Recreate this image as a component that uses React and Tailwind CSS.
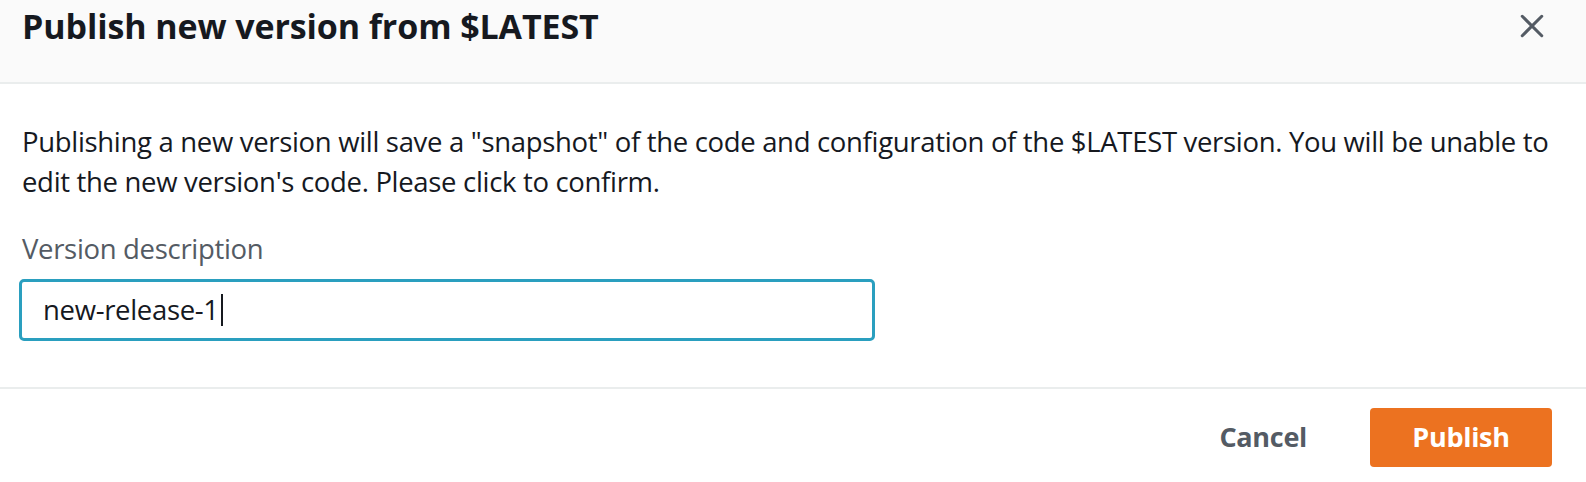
export default function App() {
  return (
    <div
      className="w-[1586px] h-[482px] bg-white flex flex-col overflow-hidden"
      style={{ fontFamily: '"Open Sans", "Noto Sans", sans-serif' }}
    >
      {/* header */}
      <div className="h-[84px] shrink-0 bg-[#fafafa] border-b-2 border-[#eaeded] flex items-start justify-between pl-[22px] pr-[41px] pt-[6px]">
        <h1 className="text-[34px] font-bold text-[#16191f] tracking-[-0.1px] leading-[40px]">
          Publish new version from $LATEST
        </h1>
        <button className="mt-[7px] text-[#545b64]">
          <svg width="26" height="26" viewBox="0 0 24 24" fill="none" stroke="currentColor" strokeWidth="2.8" strokeLinecap="round">
            <path d="M3 3 L21 21 M21 3 L3 21" />
          </svg>
        </button>
      </div>

      {/* body */}
      <div className="h-[305px] shrink-0 border-b-2 border-[#eaeded] px-[19px] pt-[38px]">
        <p className="text-[27.5px] leading-[40px] text-[#16191f] tracking-[-0.32px] pl-[3px] whitespace-nowrap">
          Publishing a new version will save a "snapshot" of the code and configuration of the $LATEST version. You will be unable to
          <br />
          edit the new version's code. Please click to confirm.
        </p>
        <label className="block mt-[27px] text-[27.5px] leading-[40px] text-[#545b64] tracking-[-0.32px] pl-[3px]">
          Version description
        </label>
        <div className="mt-[10px] w-[856px] h-[62px] border-[3px] border-[#2a9fbf] rounded-[5px] flex items-center pl-[21px]">
          <span className="text-[27.5px] text-[#16191f] tracking-[-0.32px]">new-release-1</span>
          <span className="ml-[2px] w-[2px] h-[32px] bg-[#16191f]" />
        </div>
      </div>

      {/* footer */}
      <div className="flex-1 flex items-start justify-end pr-[34px] pt-[19px]">
        <button className="h-[59px] mr-[63px] text-[27px] font-bold text-[#545b64] tracking-[-0.3px]">
          Cancel
        </button>
        <button className="w-[182px] h-[59px] rounded-[4px] bg-[#ec7220] text-white text-[27px] font-bold tracking-[-0.3px]">
          Publish
        </button>
      </div>
    </div>
  );
}
